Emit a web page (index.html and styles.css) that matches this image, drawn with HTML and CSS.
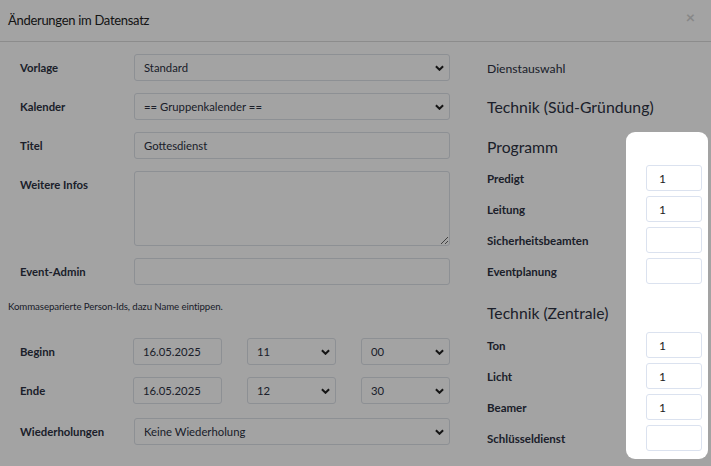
FILE: index.html
```html
<!DOCTYPE html>
<html lang="de">

<head>
    <meta charset="UTF-8">
    <meta name="viewport" content="width=device-width, initial-scale=1.0">
    <title>Änderungen im Datensatz</title>
    <link rel="stylesheet" href="styles.css">
</head>

<body>
    <div class="modal">
        <div class="modal-header">
            <span class="modal-title">Änderungen im Datensatz</span>
            <span class="close">×</span>
        </div>
        <div class="modal-body">
            <div class="col-left">
                <div class="row">
                    <label>Vorlage</label>
                    <div class="field select"><span>Standard</span><svg viewBox="0 0 10 6"><path d="M1 1l4 4 4-4" /></svg></div>
                </div>
                <div class="row">
                    <label>Kalender</label>
                    <div class="field select"><span>== Gruppenkalender ==</span><svg viewBox="0 0 10 6"><path d="M1 1l4 4 4-4" /></svg></div>
                </div>
                <div class="row">
                    <label>Titel</label>
                    <input class="field" type="text" value="Gottesdienst">
                </div>
                <div class="row">
                    <label>Weitere Infos</label>
                    <textarea class="field area"></textarea>
                </div>
                <div class="row">
                    <label>Event-Admin</label>
                    <input class="field" type="text" value="">
                </div>
                <p class="help">Kommaseparierte Person-Ids, dazu Name eintippen.</p>
                <div class="row">
                    <label>Beginn</label>
                    <div class="time-row">
                        <input class="field date" type="text" value="16.05.2025">
                        <div class="field select small"><span>11</span><svg viewBox="0 0 10 6"><path d="M1 1l4 4 4-4" /></svg></div>
                        <div class="field select small"><span>00</span><svg viewBox="0 0 10 6"><path d="M1 1l4 4 4-4" /></svg></div>
                    </div>
                </div>
                <div class="row wide">
                    <label>Ende</label>
                    <div class="time-row">
                        <input class="field date" type="text" value="16.05.2025">
                        <div class="field select small"><span>12</span><svg viewBox="0 0 10 6"><path d="M1 1l4 4 4-4" /></svg></div>
                        <div class="field select small"><span>30</span><svg viewBox="0 0 10 6"><path d="M1 1l4 4 4-4" /></svg></div>
                    </div>
                </div>
                <div class="row">
                    <label>Wiederholungen</label>
                    <div class="field select"><span>Keine Wiederholung</span><svg viewBox="0 0 10 6"><path d="M1 1l4 4 4-4" /></svg></div>
                </div>
            </div>

            <div class="col-right">
                <div class="section-title">Dienstauswahl</div>
                <h3>Technik (Süd-Gründung)</h3>
                <h4>Programm</h4>
                <div class="duty"><span>Predigt</span><input class="num" type="text" value="1"></div>
                <div class="duty"><span>Leitung</span><input class="num" type="text" value="1"></div>
                <div class="duty"><span>Sicherheitsbeamten</span><input class="num" type="text" value=""></div>
                <div class="duty"><span>Eventplanung</span><input class="num" type="text" value=""></div>
                <h4 class="next">Technik (Zentrale)</h4>
                <div class="duty"><span>Ton</span><input class="num" type="text" value="1"></div>
                <div class="duty"><span>Licht</span><input class="num" type="text" value="1"></div>
                <div class="duty"><span>Beamer</span><input class="num" type="text" value="1"></div>
                <div class="duty"><span>Schlüsseldienst</span><input class="num" type="text" value=""></div>
            </div>
        </div>
    </div>

    <!-- tour highlight over the duty inputs -->
    <div class="spotlight"></div>
</body>

</html>
```

FILE: styles.css
```css
* {
    box-sizing: border-box;
}

body {
    margin: 0;
    background: #fff;
    font-family: Lato, "Noto Sans", sans-serif;
    color: #2c3142;
    overflow: hidden;
}

.modal-header {
    height: 42px;
    display: flex;
    align-items: center;
    justify-content: space-between;
    padding: 0 16px 2px 8px;
    border-bottom: 1px solid #dcdcdc;
}

.modal-title {
    font-size: 13px;
    letter-spacing: -0.3px;
    color: #222;
}

.close {
    font-size: 16px;
    color: #d4d4d4;
    font-weight: bold;
    margin-top: -6px;
}

.modal-body {
    display: flex;
}

.col-left {
    width: 450px;
    padding: 12px 0 0 8px;
}

.col-right {
    flex: 1;
    padding: 0 9px 0 487px;
    margin-left: -450px;
}

.row {
    display: flex;
    align-items: flex-start;
    margin-bottom: 12px;
}

.row.wide {
    margin-bottom: 14px;
}

.row label {
    width: 126px;
    padding-left: 12px;
    line-height: 27px;
    font-size: 11.3px;
    font-weight: bold;
}

.field {
    width: 316px;
    height: 27px;
    border: 1px solid #dde1e8;
    border-radius: 3px;
    background: #fff;
    padding: 0 9px;
    font-family: Lato, "Noto Sans", sans-serif;
    font-size: 11.3px;
    color: #2c3142;
    outline: none;
}

.select {
    display: flex;
    align-items: center;
    justify-content: space-between;
}

.select svg {
    width: 9px;
    height: 6px;
    fill: none;
    stroke: #222;
    stroke-width: 2.2;
    margin-right: -4px;
}

.area {
    height: 75px;
    resize: vertical;
}

.help {
    margin: 15px 0 26px 0;
    font-size: 9.7px;
    letter-spacing: -0.1px;
}

.time-row {
    display: flex;
    gap: 25px;
}

.date {
    width: 89px;
}

.small {
    width: 89px;
}

.section-title {
    margin-top: 17px;
    line-height: 20px;
    font-size: 12.2px;
}

h3 {
    margin: 16px 0 0 0;
    line-height: 24px;
    font-size: 15.8px;
    font-weight: normal;
}

h4 {
    margin: 16px 0 6px 0;
    line-height: 24px;
    font-size: 15.7px;
    font-weight: normal;
}

h4.next {
    margin-top: 17px;
    margin-bottom: 7px;
}

.duty {
    display: flex;
    align-items: center;
    justify-content: space-between;
    height: 26px;
    margin-bottom: 5px;
    font-size: 11.5px;
    font-weight: bold;
}

.num {
    width: 56px;
    height: 26px;
    border: 1px solid #dbe2ef;
    border-radius: 3px;
    padding: 0 12px;
    font-family: Lato, "Noto Sans", sans-serif;
    font-size: 12px;
    color: #222;
    outline: none;
}

.spotlight {
    position: absolute;
    left: 626px;
    top: 132px;
    width: 82px;
    height: 327px;
    border-radius: 9px;
    box-shadow: 0 0 0 2000px rgba(0, 0, 0, 0.36);
}
```
